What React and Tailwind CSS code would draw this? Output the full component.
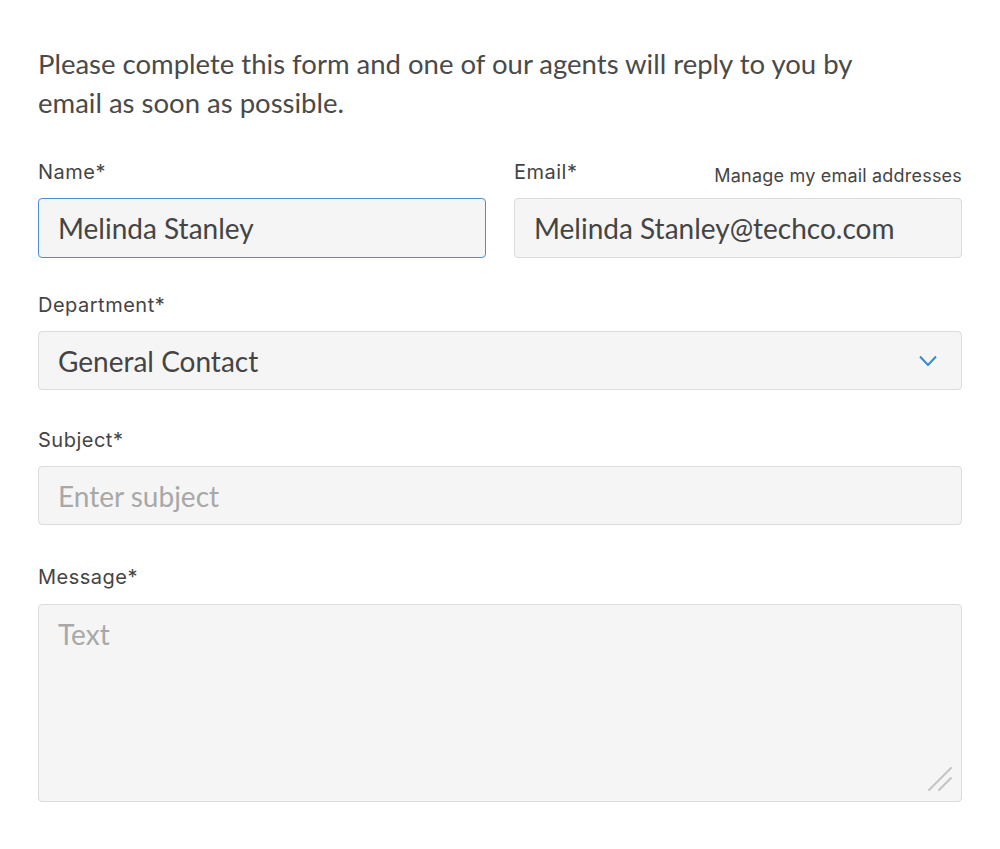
import { useState } from "react";

function Label({ children }) {
  return (
    <label className="block text-[20px] leading-[26px] tracking-[0.5px] text-[#444] font-['Inter',sans-serif]">
      {children}
    </label>
  );
}

const fieldBase =
  "w-full rounded-[4px] border bg-[#f5f5f5] px-[19px] text-[28px] text-[#444] font-['Lato',sans-serif] placeholder:text-[#a8a8a8] outline-none";

export default function App() {
  const [name, setName] = useState("Melinda Stanley");
  const [email, setEmail] = useState("Melinda Stanley@techco.com");

  return (
    <div className="min-h-screen bg-white">
      <form className="mx-[38px] pt-[44px]">
        <p className="max-w-[840px] text-[27.5px] leading-[39px] text-[#4a4a4a] font-['Lato',sans-serif]">
          Please complete this form and one of our agents will reply to you by
          email as soon as possible.
        </p>

        {/* Name + email row */}
        <div className="mt-[37px] grid grid-cols-2 gap-[28px]">
          <div>
            <Label>Name*</Label>
            <input
              value={name}
              onChange={(e) => setName(e.target.value)}
              className={fieldBase + " mt-[13px] h-[60px] border-[#4a90d9]"}
            />
          </div>
          <div>
            <div className="flex items-end justify-between">
              <Label>Email*</Label>
              <a className="text-[18px] leading-[24px] tracking-[0.2px] text-[#444] font-['Inter',sans-serif] -mb-[3px]">
                Manage my email addresses
              </a>
            </div>
            <input
              value={email}
              onChange={(e) => setEmail(e.target.value)}
              className={fieldBase + " mt-[13px] h-[60px] border-[#dcdcdc]"}
            />
          </div>
        </div>

        {/* Department */}
        <div className="mt-[34px]">
          <Label>Department*</Label>
          <div className="relative mt-[13px]">
            <select
              defaultValue="general"
              className={fieldBase + " h-[59px] appearance-none border-[#dcdcdc]"}
            >
              <option value="general">General Contact</option>
              <option value="billing">Billing</option>
              <option value="support">Technical Support</option>
            </select>
            <svg
              className="pointer-events-none absolute right-[25px] top-1/2 -translate-y-1/2"
              width="18"
              height="11"
              viewBox="0 0 18 11"
              fill="none"
            >
              <path d="M1 1l8 8.5L17 1" stroke="#3b8ad9" strokeWidth="2" />
            </svg>
          </div>
        </div>

        {/* Subject */}
        <div className="mt-[37px]">
          <Label>Subject*</Label>
          <input
            placeholder="Enter subject"
            className={fieldBase + " mt-[13px] h-[59px] border-[#dcdcdc]"}
          />
        </div>

        {/* Message */}
        <div className="mt-[39px]">
          <Label>Message*</Label>
          <div className="relative mt-[14px]">
            <textarea
              placeholder="Text"
              className={fieldBase + " block h-[198px] resize-none border-[#dcdcdc] py-[8px]"}
            />
            {/* resize grip */}
            <svg
              className="pointer-events-none absolute bottom-[10px] right-[9px]"
              width="26"
              height="26"
              viewBox="0 0 26 26"
              fill="none"
            >
              <path d="M2 24L24 2M12 24L24 12" stroke="#c4c4c4" strokeWidth="2" strokeLinecap="round" />
            </svg>
          </div>
        </div>
      </form>
    </div>
  );
}
